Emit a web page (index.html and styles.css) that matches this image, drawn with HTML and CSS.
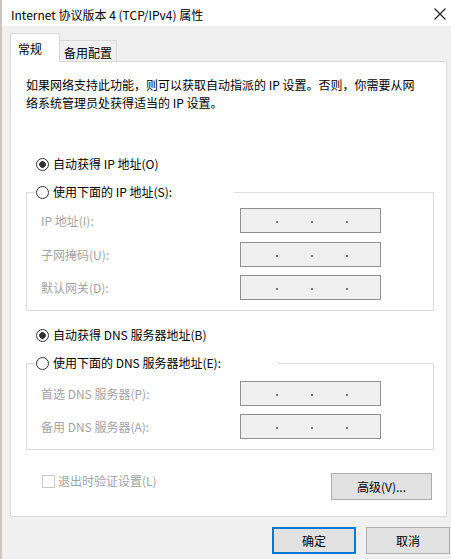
FILE: index.html
```html
<!DOCTYPE html>
<html>
<head>
  <meta charset="utf-8">
  <title>Internet 协议版本 4 (TCP/IPv4) 属性</title>
  <link rel="stylesheet" href="styles.css">
</head>
<body>
<div class="screen">
  <div class="edge"></div>
  <div class="dialog">
    <div class="titlebar">
      <span class="title">Internet 协议版本 4 (TCP/IPv4) 属性</span>
      <svg class="close" width="12" height="12" viewBox="0 0 12 12">
        <path d="M0.5 0.5 L11.5 11.5 M11.5 0.5 L0.5 11.5" stroke="#1a1a1a" stroke-width="1.1" fill="none"/>
      </svg>
    </div>

    <div class="content">
      <div class="tabs">
        <div class="tab active">常规</div>
        <div class="tab">备用配置</div>
      </div>

      <div class="panel">
        <p class="intro">如果网络支持此功能，则可以获取自动指派的 IP 设置。否则，你需要从网<br>络系统管理员处获得适当的 IP 设置。</p>

        <div class="choice first"><span class="radio checked"></span>自动获得 IP 地址(O)</div>
        <fieldset class="group ipgroup">
          <legend class="legend-ip"><span class="radio"></span>使用下面的 IP 地址(S):</legend>
          <div class="rows">
            <div class="row"><span class="label">IP 地址(I):</span><span class="ipbox"><i></i><i></i><i></i></span></div>
            <div class="row"><span class="label">子网掩码(U):</span><span class="ipbox"><i></i><i></i><i></i></span></div>
            <div class="row"><span class="label">默认网关(D):</span><span class="ipbox"><i></i><i></i><i></i></span></div>
          </div>
        </fieldset>

        <div class="choice second"><span class="radio checked"></span>自动获得 DNS 服务器地址(B)</div>
        <fieldset class="group dnsgroup">
          <legend class="legend-dns"><span class="radio"></span>使用下面的 DNS 服务器地址(E):</legend>
          <div class="rows">
            <div class="row"><span class="label">首选 DNS 服务器(P):</span><span class="ipbox"><i></i><i></i><i></i></span></div>
            <div class="row"><span class="label">备用 DNS 服务器(A):</span><span class="ipbox"><i></i><i></i><i></i></span></div>
          </div>
        </fieldset>

        <div class="bottomrow">
          <span class="check"><span class="box"></span>退出时验证设置(L)</span>
          <button class="btn advanced">高级(V)...</button>
        </div>
      </div>

      <div class="footer">
        <button class="btn default">确定</button>
        <button class="btn">取消</button>
      </div>
    </div>
  </div>
</div>
</body>
</html>
```

FILE: styles.css
```css
html, body { margin: 0; padding: 0; }
body {
  font-family: "Noto Sans CJK SC", sans-serif;
  font-size: 12px;
  color: #000;
  background: #f0f0f0;
}
.screen {
  display: flex;
  width: 451px;
  height: 559px;
  overflow: hidden;
}
.edge {
  width: 2px;
  background: #cdc5c1;
}
.dialog {
  flex: 1;
  display: flex;
  flex-direction: column;
}

/* title bar */
.titlebar {
  height: 26px;
  box-sizing: border-box;
  padding: 2px 4px 0 9px;
  background: #fff;
  display: flex;
  align-items: center;
  justify-content: space-between;
}
.close { margin-right: 1px; margin-top: -1px; }

.content {
  padding: 7px 0 0 8px;
}

/* tabs */
.tabs {
  display: flex;
  align-items: flex-end;
  height: 29px;
  margin-bottom: -1px;
}
.tab {
  box-sizing: border-box;
  height: 22px;
  padding: 3px 4px 0 4px;
  line-height: 18px;
  border: 1px solid #d9d9d9;
  border-left: none;
  background: #f0f0f0;
}
.tab.active {
  width: 50px;
  height: 29px;
  padding: 6px 0 0 7px;
  border-left: 1px solid #d9d9d9;
  border-bottom: none;
  background: #fff;
}

/* panel */
.panel {
  background: #fff;
  border: 1px solid #d9d9d9;
  margin-right: 4px;
  padding: 14px 12px 16px 15px;
}
.intro {
  margin: 0;
  line-height: 18px;
  white-space: nowrap;
}
.choice {
  display: flex;
  align-items: center;
  line-height: 18px;
  padding-left: 10px;
}
.choice.first { margin-top: 43px; }
.choice.second { margin-top: 15px; }

.radio {
  width: 13px;
  height: 13px;
  box-sizing: border-box;
  border: 1px solid #333;
  border-radius: 50%;
  background: #fff;
  margin-right: 4px;
  flex: none;
}
.radio.checked {
  background: radial-gradient(circle, #333 0 3px, #fff 3.6px);
}

/* group boxes */
.group {
  margin: 10px 0 0 0;
  padding: 7px 8px 10px 8px;
  border: 1px solid #dcdcdc;
}
.dnsgroup { padding-top: 9px; }
.group legend {
  display: flex;
  align-items: center;
  padding: 0 0 0 1px;
  line-height: 18px;
  box-sizing: border-box;
}
.legend-ip { width: 199px; }
.legend-dns { width: 243px; }

.rows {
  display: flex;
  flex-direction: column;
  gap: 8.5px;
  padding-left: 6px;
}
.dnsgroup .rows { gap: 8px; }
.row {
  display: grid;
  grid-template-columns: 199px 141px;
  align-items: center;
}
.label { color: #a3a3a3; }
.ipbox {
  box-sizing: border-box;
  height: 25px;
  border: 1px solid #8f8f8f;
  background: #f0f0f0;
  display: flex;
  align-items: center;
  gap: 33px;
  padding-left: 35px;
}
.ipbox i {
  width: 2px;
  height: 2px;
  margin-top: 3px;
  background: #7a7a7a;
}

/* bottom row */
.bottomrow {
  display: flex;
  justify-content: space-between;
  align-items: flex-start;
  margin-top: 22px;
  padding: 0 2px 0 16px;
}
.check {
  display: flex;
  align-items: center;
  line-height: 18px;
  color: #a3a3a3;
}
.check .box {
  width: 13px;
  height: 13px;
  box-sizing: border-box;
  border: 1px solid #c6c6c6;
  background: #fff;
  margin-right: 3px;
}

.btn {
  font-family: inherit;
  font-size: 12px;
  color: #000;
  box-sizing: border-box;
  height: 27px;
  width: 84px;
  background: #e1e1e1;
  border: 1px solid #adadad;
  padding: 0;
}
.advanced {
  width: 101px;
  margin-top: 1px;
}
.default {
  border: 2px solid #0078d7;
}

.footer {
  display: flex;
  justify-content: flex-end;
  gap: 10px;
  margin-top: 10px;
  padding-right: 1px;
}
```
